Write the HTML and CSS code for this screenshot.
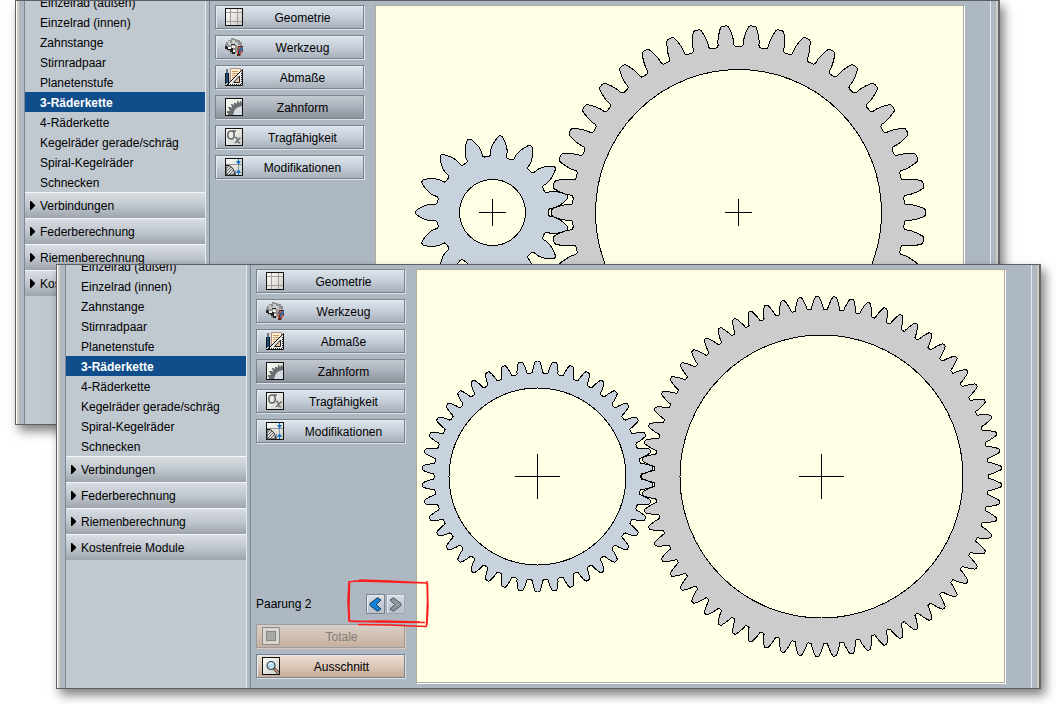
FILE: index.html
```html
<!DOCTYPE html>
<html lang="de">
<head>
<meta charset="utf-8">
<title>Zahnradberechnung – 3-Räderkette</title>
<link rel="stylesheet" href="styles.css">
</head>
<body>
<svg class="defs" aria-hidden="true">
  <defs>
    <linearGradient id="paper" x1="0" y1="0" x2="1" y2="1"><stop offset="0" stop-color="#fffffb"/><stop offset="1" stop-color="#c9cdc4"/></linearGradient>
    <symbol id="i-geo" viewBox="0 0 18 18">
      <rect x=".5" y=".5" width="17" height="17" fill="url(#paper)" stroke="#111"/>
      <path d="M5.5 1v16M12.500 1v16M1 4.500h16M1 13.500h16" stroke="#aa9a9c" fill="none"/>
    </symbol>
    <symbol id="i-tool" viewBox="0 0 18 18">
      <path d="M1 4h2V2h3V0h3v1h3v1h3v2h2v4h-1v4h-3v3H8v1H5v-3H2v-3H0V6h1z" fill="#8f9291"/>
      <path d="M3 3h2v2h2V2h3v2h3v3h2v3h-3V7H9v3H7V7H3z" fill="#c9cccb"/>
      <path d="M0 8h2v1h3v1h3v2h2v4H7v-2H5v-2H2v-1H0zM6 6h4v1H6z" fill="#222"/>
      <path d="M3 9h3v2H3zM7 8h3v2H7zM8 12h2v2H8z" fill="#f4f2e8"/>
      <path d="M13 8h5v5l-3 5h-3v-5z" fill="#5b2422"/>
      <path d="M14 9h2l-3 4v3h-1v-4zM17 12v3l-2 2v-2z" fill="#e06a4a"/>
      <path d="M16 9h2v2l-4 5v-3zM13 10h1v2h-1z" fill="#3d6fa8"/>
    </symbol>
    <symbol id="i-dim" viewBox="0 0 18 18">
      <path d="M5.500.500h10v15h-10z" fill="#fbf0dc" stroke="#b89080"/>
      <path d="M7 3.500h6M7 5.500h6M7 7.500h5M7 9.500h3" stroke="#d49a62"/>
      <path d="M1.500 17.500 17.500 1.500v16z" fill="#e8ebe6" stroke="#111"/>
      <path d="M8.500 14.500 14.500 8v6.500z" fill="#e6c9a4" stroke="#222"/>
      <path d="M3 16.500h13M16.500 5v11" stroke="#222" stroke-dasharray="1 1"/>
      <path d="M1 5h2v10H1z" fill="#174b7a"/><path d="M2 1v4M0 17.500h17M3.500 5v11M.500 5v11" stroke="#111"/>
    </symbol>
    <symbol id="i-form" viewBox="0 0 18 18">
      <rect x=".5" y=".5" width="17" height="17" fill="url(#paper)" stroke="#111"/>
      <path d="M17 7v10H7q0-9 10-10z" fill="#d3dce2"/>
      <path d="M3 17v-2H2v-2h3v-1H4v-2H3V9h3l1 1V8L6 7V6h1l2 1V5h2l1 1V3h1l1 2 1-1V3h1l1 2v3q-8 1-9 9z" fill="#6b6e70"/>
    </symbol>
    <symbol id="i-sigma" viewBox="0 0 18 18">
      <rect x=".5" y=".5" width="17" height="17" fill="url(#paper)" stroke="#111"/>
      <path d="M11 3H6Q2.800 3 2.800 7T6 11q3.200 0 3.200-4T6.500 3" fill="none" stroke="#62666a" stroke-width="1.600"/>
      <path d="M10 9.500q1.500-.5 2 1.500l1 3q.5 1 2 .500M15.500 9.500 10 15" fill="none" stroke="#62666a" stroke-width="1.400"/>
    </symbol>
    <symbol id="i-mod" viewBox="0 0 18 18">
      <rect x=".5" y=".5" width="17" height="17" fill="url(#paper)" stroke="#111"/>
      <path d="M1 6.500h16M10.500 17v-5" stroke="#8d9398"/>
      <path d="M1 7.500h3q5 2 6 9.500H1z" fill="#d9dcdb" stroke="#222"/>
      <path d="m1 11 3-3M1 14l5-5M1 17l7-7M4 17l5-5M7 17l3-3" stroke="#444" stroke-width=".8"/>
      <path d="M13.500 1v5M13.500 12v5" stroke="#1973c8"/><path d="M11 3h5l-2.500 4zM11 15h5l-2.500-4z" fill="#1973c8"/>
      <path d="M13.500 7v4" stroke="#8d9398"/>
    </symbol>
    <symbol id="i-total" viewBox="0 0 18 18">
      <rect x=".5" y=".5" width="17" height="17" fill="#d9d6d0" stroke="#8d8a88"/>
      <rect x="4.500" y="4.500" width="9" height="9" fill="#a8a9a7" stroke="#858584"/>
    </symbol>
    <symbol id="i-zoom" viewBox="0 0 18 18">
      <rect x=".5" y=".5" width="17" height="17" fill="url(#paper)" stroke="#111"/>
      <circle cx="9" cy="8.500" r="4" fill="#b9def0" stroke="#3b4750" stroke-width="1.200"/>
      <path d="M7 7.500q1-2 3-1" stroke="#fff" fill="none"/>
      <path d="m12 11.500 4.500 4.500" stroke="#4a3028" stroke-width="3"/><path d="m12.500 12 4 4" stroke="#dba48a" stroke-width="1.300"/>
    </symbol>
    <symbol id="i-tri" viewBox="0 0 5 9"><path d="M0 0h1l4 4v1L1 9H0z" fill="#000"/></symbol>
    <symbol id="i-chev" viewBox="0 0 13 15"><path d="M8.500.7 12 3 7.200 7.500 12 12l-3.500 2.300L1 8.500v-2z" fill="currentColor" stroke="#24384c" stroke-width="1"/></symbol>
  </defs>
</svg>

<main class="desktop">
  <section class="window window-back" aria-label="Paarung 1">
    <nav class="sidebar">
      <ul class="items">
        <li><a href="#">Einzelrad (außen)</a></li>
        <li><a href="#">Einzelrad (innen)</a></li>
        <li><a href="#">Zahnstange</a></li>
        <li><a href="#">Stirnradpaar</a></li>
        <li><a href="#">Planetenstufe</a></li>
        <li><a href="#" class="current" aria-current="page">3-Räderkette</a></li>
        <li><a href="#">4-Räderkette</a></li>
        <li><a href="#">Kegelräder gerade/schräg</a></li>
        <li><a href="#">Spiral-Kegelräder</a></li>
        <li><a href="#">Schnecken</a></li>
      </ul>
      <button class="group" type="button"><svg><use href="#i-tri"/></svg>Verbindungen</button>
      <button class="group" type="button"><svg><use href="#i-tri"/></svg>Federberechnung</button>
      <button class="group" type="button"><svg><use href="#i-tri"/></svg>Riemenberechnung</button>
      <button class="group" type="button"><svg><use href="#i-tri"/></svg>Kostenfreie Module</button>
    </nav>
    <div class="tools">
      <button class="btn" type="button"><svg><use href="#i-geo"/></svg><span>Geometrie</span></button>
      <button class="btn" type="button"><svg><use href="#i-tool"/></svg><span>Werkzeug</span></button>
      <button class="btn" type="button"><svg><use href="#i-dim"/></svg><span>Abmaße</span></button>
      <button class="btn pressed" type="button"><svg><use href="#i-form"/></svg><span>Zahnform</span></button>
      <button class="btn" type="button"><svg><use href="#i-sigma"/></svg><span>Tragfähigkeit</span></button>
      <button class="btn" type="button"><svg><use href="#i-mod"/></svg><span>Modifikationen</span></button>
    </div>
    <div class="canvas">
      <svg viewBox="0 0 587 412" role="img" aria-label="Zahnform Paarung 1">
        <path class="gear second" data-cx="362.5" data-cy="206.5" data-z="42" data-pitch="181.3" data-tip="187" data-root="166" data-bore="143" data-shift="-0.35" data-phase="180"/>
        <path class="gear first" data-cx="116.5" data-cy="206.5" data-z="15" data-pitch="64.7" data-tip="77" data-root="56" data-bore="33" data-shift="0.35" data-phase="180"/>
        <path class="cross" d="M103 206.500h27M116.500 193v27M349 206.500h27M362.500 193v27"/>
      </svg>
    </div>
    <div class="edge"></div>
  </section>

  <section class="window window-front" aria-label="Paarung 2">
    <nav class="sidebar">
      <ul class="items">
        <li><a href="#">Einzelrad (außen)</a></li>
        <li><a href="#">Einzelrad (innen)</a></li>
        <li><a href="#">Zahnstange</a></li>
        <li><a href="#">Stirnradpaar</a></li>
        <li><a href="#">Planetenstufe</a></li>
        <li><a href="#" class="current" aria-current="page">3-Räderkette</a></li>
        <li><a href="#">4-Räderkette</a></li>
        <li><a href="#">Kegelräder gerade/schräg</a></li>
        <li><a href="#">Spiral-Kegelräder</a></li>
        <li><a href="#">Schnecken</a></li>
      </ul>
      <button class="group" type="button"><svg><use href="#i-tri"/></svg>Verbindungen</button>
      <button class="group" type="button"><svg><use href="#i-tri"/></svg>Federberechnung</button>
      <button class="group" type="button"><svg><use href="#i-tri"/></svg>Riemenberechnung</button>
      <button class="group" type="button"><svg><use href="#i-tri"/></svg>Kostenfreie Module</button>
    </nav>
    <div class="tools">
      <button class="btn" type="button"><svg><use href="#i-geo"/></svg><span>Geometrie</span></button>
      <button class="btn" type="button"><svg><use href="#i-tool"/></svg><span>Werkzeug</span></button>
      <button class="btn" type="button"><svg><use href="#i-dim"/></svg><span>Abmaße</span></button>
      <button class="btn pressed" type="button"><svg><use href="#i-form"/></svg><span>Zahnform</span></button>
      <button class="btn" type="button"><svg><use href="#i-sigma"/></svg><span>Tragfähigkeit</span></button>
      <button class="btn" type="button"><svg><use href="#i-mod"/></svg><span>Modifikationen</span></button>
      <div class="pairing">
        <span>Paarung 2</span>
        <div class="steps">
          <button class="step" type="button" aria-label="Vorherige Paarung"><svg><use href="#i-chev"/></svg></button>
          <button class="step next" type="button" aria-label="Nächste Paarung" disabled><svg><use href="#i-chev"/></svg></button>
          <svg class="marker" viewBox="0 0 84 52" aria-hidden="true">
            <path d="M3 5 10 4l20 .5 30 1 21 .5M13 3l30 1 38 2M81 4l.5 20-1 25M81.500 6 82 30l-1 18M3 4 2 24l1 20M3.500 6 3 30l.5 14M2 44l30 1 47 .5M4 44.500l34-.5 36 1M12 47.500l30 .5 39 1.500"/>
          </svg>
        </div>
      </div>
      <button class="btn tan" type="button" disabled><svg><use href="#i-total"/></svg><span>Totale</span></button>
      <button class="btn tan" type="button"><svg><use href="#i-zoom"/></svg><span>Ausschnitt</span></button>
    </div>
    <div class="canvas">
      <svg viewBox="0 0 587 412" role="img" aria-label="Zahnform Paarung 2">
        <path class="gear second" data-cx="404.5" data-cy="206.5" data-z="65" data-pitch="172.5" data-tip="180" data-root="167" data-bore="141.5" data-shift="0.3" data-phase="180"/>
        <path class="gear first" data-cx="120.5" data-cy="206.5" data-z="42" data-pitch="111.5" data-tip="115.5" data-root="103.5" data-bore="88.5" data-shift="-0.35" data-phase="90"/>
        <path class="cross" d="M98 206.500h45M120.500 184v45M382 206.500h45M404.500 184v45"/>
      </svg>
    </div>
    <div class="edge"></div>
  </section>
</main>
<script src="gears.js"></script>
</body>
</html>
```

FILE: styles.css
```css
* { box-sizing: border-box; }

body {
  margin: 0;
  background: #fff;
  color: #000;
  font: 12px/18px "Liberation Sans", Arial, sans-serif;
}

button { font: inherit; color: inherit; margin: 0; padding: 0; }

.defs { position: absolute; width: 0; height: 0; }

.desktop { position: relative; min-height: 704px; overflow: hidden; }

.window {
  position: absolute;
  display: flex;
  width: calc(100% - 71px);
  border: 1px solid #5c5e62;
  border-right: 2px solid #66676b;
  background: #aeb8c2;
  box-shadow: 4px 6px 10px rgba(0, 0, 0, .5);
}

.window-back { left: 15px; top: 0; }
.window-front { left: 56px; top: 264px; }

.window::before {
  content: "";
  width: 8px;
  background: linear-gradient(90deg, #fff 1px, #d2cbc2 1px 3px, #aeb8c2 3px);
}

.sidebar {
  width: 182px;
  overflow: hidden;
  background: #c0c8d0;
  border-left: 1px solid #7c8793;
  border-right: 1px solid #e4eaef;
}

.items { list-style: none; margin: -9px 0 0; padding: 0; }

.items a {
  display: block;
  height: 20px;
  padding: 2px 0 0 15px;
  color: inherit;
  text-decoration: none;
  white-space: nowrap;
}

.items .current { background: #104e8b; color: #fff; font-weight: bold; }

.group {
  display: flex;
  align-items: center;
  gap: 5px;
  width: 100%;
  height: 26px;
  padding-left: 5px;
  border: 0;
  border-top: 1px solid #f4f6f8;
  background: linear-gradient(#d8dde2, #c0c7ce 50%, #9da4ac);
  text-align: left;
}

.group svg { width: 5px; height: 9px; }

.tools {
  display: flex;
  flex-direction: column;
  gap: 6px;
  width: 166px;
  margin-left: 3px;
  padding: 4px 11px 10px 5px;
  border-left: 1px solid #7c8793;
}

.btn {
  display: flex;
  align-items: center;
  height: 24px;
  padding: 0 1px 0 9px;
  border: 1px solid #7a828c;
  background: linear-gradient(#dde4ec, #c6cfd9 50%, #a7afb9);
  box-shadow: 1px 1px 0 #dce2e8, inset 1px 1px 0 #e6ebf0;
}

.btn svg { width: 18px; height: 18px; flex: none; }
.btn span { flex: 1; padding-top: 2px; text-align: center; }
.btn.pressed { background: linear-gradient(#c3c9d1, #aab1ba 50%, #8d949d); box-shadow: 1px 1px 0 #dce2e8; }

.btn.tan {
  padding-left: 5px;
  background: linear-gradient(#eadfd6, #dcc8b8 50%, #c4ab98);
}

.btn.tan:disabled {
  color: #857d78;
  border-color: #9a9ea3;
  background: linear-gradient(#d8cfc8, #d2c0b1 50%, #c5b09f);
  box-shadow: 1px 1px 0 #dcc8b8;
}

.pairing { display: flex; align-items: center; justify-content: space-between; margin-top: auto; margin-bottom: 4px; }

.steps { position: relative; display: flex; gap: 1px; }

.step {
  display: flex;
  align-items: center;
  justify-content: center;
  width: 19px;
  height: 20px;
  border: 1px solid #7a828c;
  background: linear-gradient(#d6dee6, #b8c1cc);
  box-shadow: inset 1px 1px 0 #e6ebf0;
  color: #0e82dc;
}

.step svg { width: 13px; height: 15px; }
.step.next { color: #84888c; border-color: #a0a7b0; }
.step.next svg { transform: scaleX(-1); opacity: .8; }

.marker {
  position: absolute;
  left: -20px;
  top: -17px;
  width: 84px;
  height: 52px;
  z-index: 2;
  pointer-events: none;
  fill: none;
  stroke: #fa1e1e;
  stroke-width: 1.5;
}

.canvas {
  flex: 1;
  min-width: 0;
  margin: 4px 0 5px;
  background: #ffffe5;
  border: 1px solid #aeaa9c;
  box-shadow: 1px 1px 0 #fff;
}

.canvas svg { display: block; width: 100%; height: auto; min-height: 412px; }

.gear { stroke: #000; stroke-width: 1; fill-rule: evenodd; shape-rendering: crispEdges; }
.gear.first { fill: #c8d2dd; }
.gear.second { fill: #cccccc; }
.cross { stroke: #000; fill: none; shape-rendering: crispEdges; }

.edge {
  width: 34px;
  background: linear-gradient(270deg, #d2cbc2 2px, #aeb8c2 2px 7px, #e4eaef 7px 8px, transparent 8px);
}
```

FILE: gears.js
```js
// Builds involute gear outlines from the data attributes of each .gear path.
const inv = a => Math.tan(a) - a;
const pressure = 20 * Math.PI / 180;

function outline(g) {
  const base = g.pitch * Math.cos(pressure);
  const atPitch = Math.PI / (2 * g.z) + 2 * g.shift * Math.tan(pressure) / g.z;
  const half = r => atPitch + inv(pressure) - (r > base ? inv(Math.acos(base / r)) : 0);
  const step = 2 * Math.PI / g.z;
  const depth = g.tip - g.root;
  const fillet = g.root + depth * 0.16;
  const round = g.tip - depth * 0.08;
  const pt = (r, a) => (g.cx + r * Math.cos(a)).toFixed(2) + ' ' + (g.cy - r * Math.sin(a)).toFixed(2);
  const radii = [];
  for (let i = 0; i <= 8; i++) radii.push(fillet + (round - fillet) * i / 8);
  let d = '';
  for (let k = 0; k < g.z; k++) {
    const c = g.phase * Math.PI / 180 + k * step;
    const foot = half(fillet);
    const floor = foot + (step / 2 - foot) * 0.6;
    d += (k ? 'L' : 'M') + pt(g.root, c - floor);
    d += 'Q' + pt(g.root, c - foot) + ' ' + pt(fillet, c - foot);
    radii.forEach(r => { d += 'L' + pt(r, c - half(r)); });
    d += 'Q' + pt(g.tip, c - half(g.tip)) + ' ' + pt(g.tip, c - half(g.tip) * 0.4);
    d += 'L' + pt(g.tip, c + half(g.tip) * 0.4);
    d += 'Q' + pt(g.tip, c + half(g.tip)) + ' ' + pt(round, c + half(round));
    radii.slice().reverse().forEach(r => { d += 'L' + pt(r, c + half(r)); });
    d += 'Q' + pt(g.root, c + foot) + ' ' + pt(g.root, c + floor);
  }
  d += 'Z';
  const b = g.bore;
  d += `M${g.cx - b} ${g.cy}a${b} ${b} 0 1 0 ${2 * b} 0a${b} ${b} 0 1 0 ${-2 * b} 0Z`;
  return d;
}

document.querySelectorAll('.gear').forEach(el => {
  const g = {};
  for (const key in el.dataset) g[key] = Number(el.dataset[key]);
  el.setAttribute('d', outline(g));
});
```
